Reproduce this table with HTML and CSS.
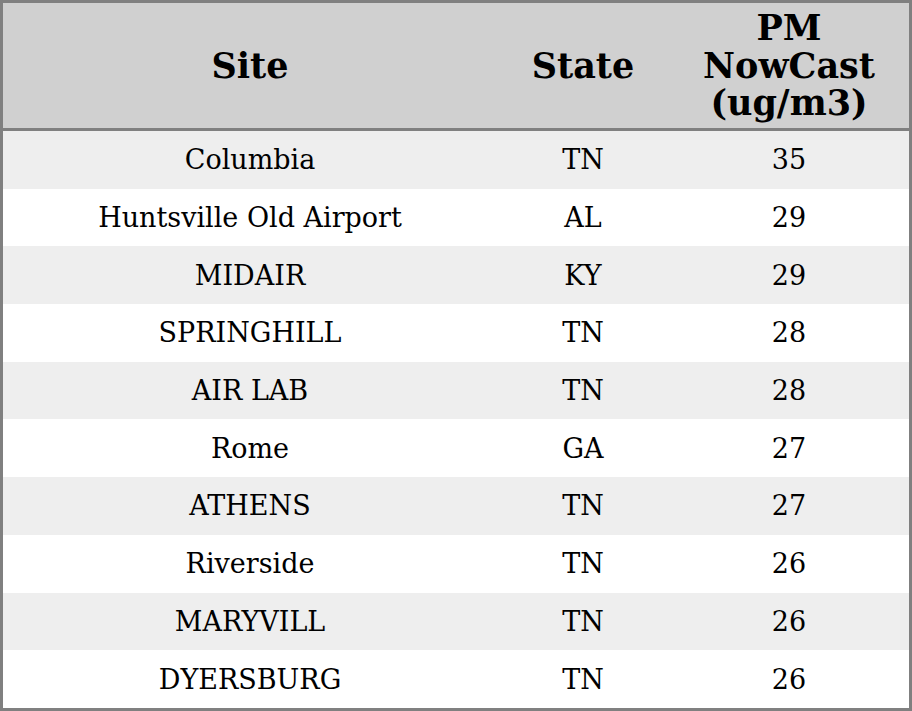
FILE: index.html
```html
<!DOCTYPE html>
<html>
<head>
<meta charset="utf-8">
<link rel="stylesheet" href="styles.css">
</head>
<body>
<table class="aq">
  <thead>
    <tr><th class="c-site">Site</th><th class="c-state">State</th><th class="c-pm">PM NowCast (ug/m3)</th></tr>
  </thead>
  <tbody>
    <tr><td>Columbia</td><td>TN</td><td>35</td></tr>
    <tr><td>Huntsville Old Airport</td><td>AL</td><td>29</td></tr>
    <tr><td>MIDAIR</td><td>KY</td><td>29</td></tr>
    <tr><td>SPRINGHILL</td><td>TN</td><td>28</td></tr>
    <tr><td>AIR LAB</td><td>TN</td><td>28</td></tr>
    <tr><td>Rome</td><td>GA</td><td>27</td></tr>
    <tr><td>ATHENS</td><td>TN</td><td>27</td></tr>
    <tr><td>Riverside</td><td>TN</td><td>26</td></tr>
    <tr><td>MARYVILL</td><td>TN</td><td>26</td></tr>
    <tr><td>DYERSBURG</td><td>TN</td><td>26</td></tr>
  </tbody>
</table>
</body>
</html>
```
FILE: styles.css
```css
html, body {
  margin: 0;
  padding: 0;
  background: #ffffff;
}
.aq {
  width: 912px;
  height: 711px;
  border-collapse: separate;
  border-spacing: 0;
  border: 3px solid #808080;
  box-sizing: border-box;
  font-family: "DejaVu Serif", serif;
  color: #000;
  table-layout: fixed;
}
.aq th {
  background: #d0d0d0;
  font-size: 35px;
  font-weight: bold;
  line-height: 37.5px;
  height: 128px;
  padding: 0 4px;
  border-bottom: 3px solid #808080;
  box-sizing: border-box;
  text-align: center;
  vertical-align: middle;
}
.c-site { width: 494px; }
.c-state { width: 172px; }
.c-pm { width: 240px; }
.aq td {
  font-size: 27px;
  text-align: center;
  vertical-align: middle;
  height: 57.7px;
  padding: 0;
}
.aq tbody tr:nth-child(odd) td {
  background: #eeeeee;
}
```
